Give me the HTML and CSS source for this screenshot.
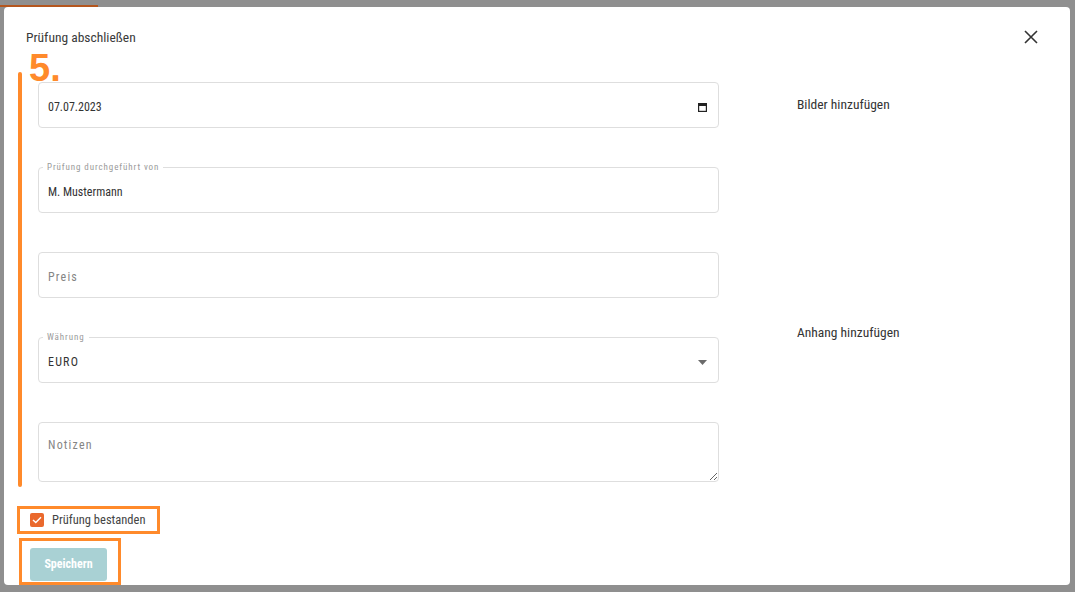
FILE: index.html
```html
<!DOCTYPE html>
<html lang="de">
<head>
    <meta charset="UTF-8">
    <meta name="viewport" content="width=device-width, initial-scale=1.0">
    <title>Prüfung abschließen</title>
    <link rel="stylesheet" href="styles.css">
</head>
<body>
    <div class="backdrop">
        <div class="page-bar"></div>

        <div class="modal">
            <div class="modal-head">
                <h2 class="modal-title">Prüfung abschließen</h2>
                <button class="close" aria-label="Schließen">
                    <svg width="14" height="14" viewBox="0 0 14 14">
                        <path d="M1 1 L13 13 M13 1 L1 13" stroke="#333" stroke-width="1.6" fill="none"/>
                    </svg>
                </button>
            </div>

            <div class="modal-body">
                <div class="fields">
                    <div class="field">
                        <span class="value">07.07.2023</span>
                        <svg class="field-icon" width="9" height="9" viewBox="0 0 9 9">
                            <rect x="0.6" y="0.6" width="7.8" height="7.8" fill="none" stroke="#222" stroke-width="1.2"/>
                            <rect x="0" y="0" width="9" height="3" fill="#222"/>
                        </svg>
                    </div>

                    <div class="field">
                        <span class="field-label">Prüfung durchgeführt von</span>
                        <input class="value" type="text" value="M. Mustermann">
                    </div>

                    <div class="field">
                        <input class="value spaced" type="text" placeholder="Preis">
                    </div>

                    <div class="field">
                        <span class="field-label">Währung</span>
                        <span class="value spaced">EURO</span>
                        <svg class="field-icon" width="9" height="5" viewBox="0 0 9 5">
                            <path d="M0 0 L9 0 L4.5 5 Z" fill="#6b6b6b"/>
                        </svg>
                    </div>

                    <textarea class="field notes" placeholder="Notizen"></textarea>
                </div>

                <div class="uploads">
                    <div class="upload first">
                        <h3>Bilder hinzufügen</h3>
                    </div>
                    <div class="upload">
                        <h3>Anhang hinzufügen</h3>
                    </div>
                </div>
            </div>

            <label class="check-row mark">
                <span class="checkbox">
                    <svg width="10" height="8" viewBox="0 0 10 8">
                        <path d="M1 4 L3.8 6.6 L9 1.2" stroke="#fff" stroke-width="1.4" fill="none"/>
                    </svg>
                </span>
                <span class="check-label">Prüfung bestanden</span>
            </label>

            <div class="save-wrap mark">
                <button class="save">Speichern</button>
            </div>

            <span class="step">5.</span>
            <span class="step-line"></span>
        </div>
    </div>
</body>
</html>
```

FILE: styles.css
```css
body {
    margin: 0;
    font-family: Roboto, "DejaVu Sans", sans-serif;
    font-stretch: 75%;
    color: #333;
}

.backdrop {
    position: relative;
    height: 592px;
    box-sizing: border-box;
    padding: 7px 5px 7px 4px;
    background: #8f8f8f;
    overflow: hidden;
}

.page-bar {
    position: absolute;
    top: 5px;
    left: 0;
    width: 98px;
    height: 2px;
    background: #b4561e;
}

.modal {
    position: relative;
    height: 100%;
    background: #fff;
    border-radius: 4px;
    display: flex;
    flex-direction: column;
    align-items: flex-start;
}

.modal-head {
    align-self: stretch;
    height: 66px;
    box-sizing: border-box;
    display: flex;
    justify-content: space-between;
    align-items: center;
    padding: 0 32px 0 22px;
}

.modal-title {
    margin: 0;
    font-size: 13.5px;
    font-weight: normal;
    color: #3a3a3a;
}

.close {
    border: none;
    background: none;
    padding: 0;
    width: 14px;
    height: 14px;
    display: flex;
    cursor: pointer;
}

.modal-body {
    display: flex;
    gap: 78px;
    padding: 14px 0 0 34px;
}

.fields {
    width: 681px;
    display: flex;
    flex-direction: column;
    gap: 39px;
}

.field {
    position: relative;
    height: 46px;
    box-sizing: border-box;
    border: 1px solid #dedede;
    border-radius: 4px;
    display: flex;
    align-items: center;
    justify-content: space-between;
    padding: 5px 11px 0 9px;
}

.field-label {
    position: absolute;
    top: -6px;
    left: 4px;
    padding: 0 4px;
    background: #fff;
    font-size: 9px;
    line-height: 11px;
    letter-spacing: 0.9px;
    color: #9a9a9a;
}

.value {
    font-family: inherit;
    font-stretch: inherit;
    font-size: 12px;
    color: #333;
    border: none;
    outline: none;
    padding: 0;
    background: none;
    flex: 1;
}

.spaced {
    letter-spacing: 1.2px;
}

.value::placeholder,
.notes::placeholder {
    color: #858585;
}

.field-icon {
    flex: none;
}

.notes {
    display: block;
    height: 60px;
    width: 100%;
    resize: vertical;
    font-family: inherit;
    font-stretch: inherit;
    font-size: 12px;
    letter-spacing: 1.2px;
    padding: 15px 9px 0;
    outline: none;
}

.uploads {
    padding-top: 12px;
}

.upload h3 {
    margin: 0;
    font-size: 13.5px;
    font-weight: normal;
    line-height: 20px;
    color: #333;
}

.upload.first {
    height: 228px;
}

.mark {
    border: 3px solid #ff8a2b;
    box-sizing: border-box;
}

.check-row {
    margin: 24px 0 0 13px;
    width: 143px;
    height: 30px;
    display: flex;
    align-items: center;
    gap: 8px;
    padding-left: 10px;
    white-space: nowrap;
}

.checkbox {
    width: 14px;
    height: 14px;
    border-radius: 2px;
    background: #ea692d;
    display: flex;
    align-items: center;
    justify-content: center;
}

.check-label {
    font-size: 12.5px;
    color: #444;
}

.save-wrap {
    margin: 4px 0 0 15px;
    width: 102px;
    height: 50px;
    padding: 7px 0 0 8px;
}

.save {
    width: 77px;
    height: 33px;
    border: none;
    border-radius: 3px;
    background: #a9d1d4;
    color: #fff;
    font-family: inherit;
    font-stretch: inherit;
    font-weight: bold;
    font-size: 12px;
}

.step {
    position: absolute;
    left: 25px;
    top: 39px;
    font-family: "Liberation Sans", Arial, sans-serif;
    font-stretch: normal;
    font-weight: bold;
    font-size: 38px;
    line-height: 44px;
    color: #ff8a2b;
}

.step-line {
    position: absolute;
    left: 14px;
    top: 65px;
    width: 4px;
    height: 415px;
    border-radius: 2px;
    background: #ff8a2b;
}
```
